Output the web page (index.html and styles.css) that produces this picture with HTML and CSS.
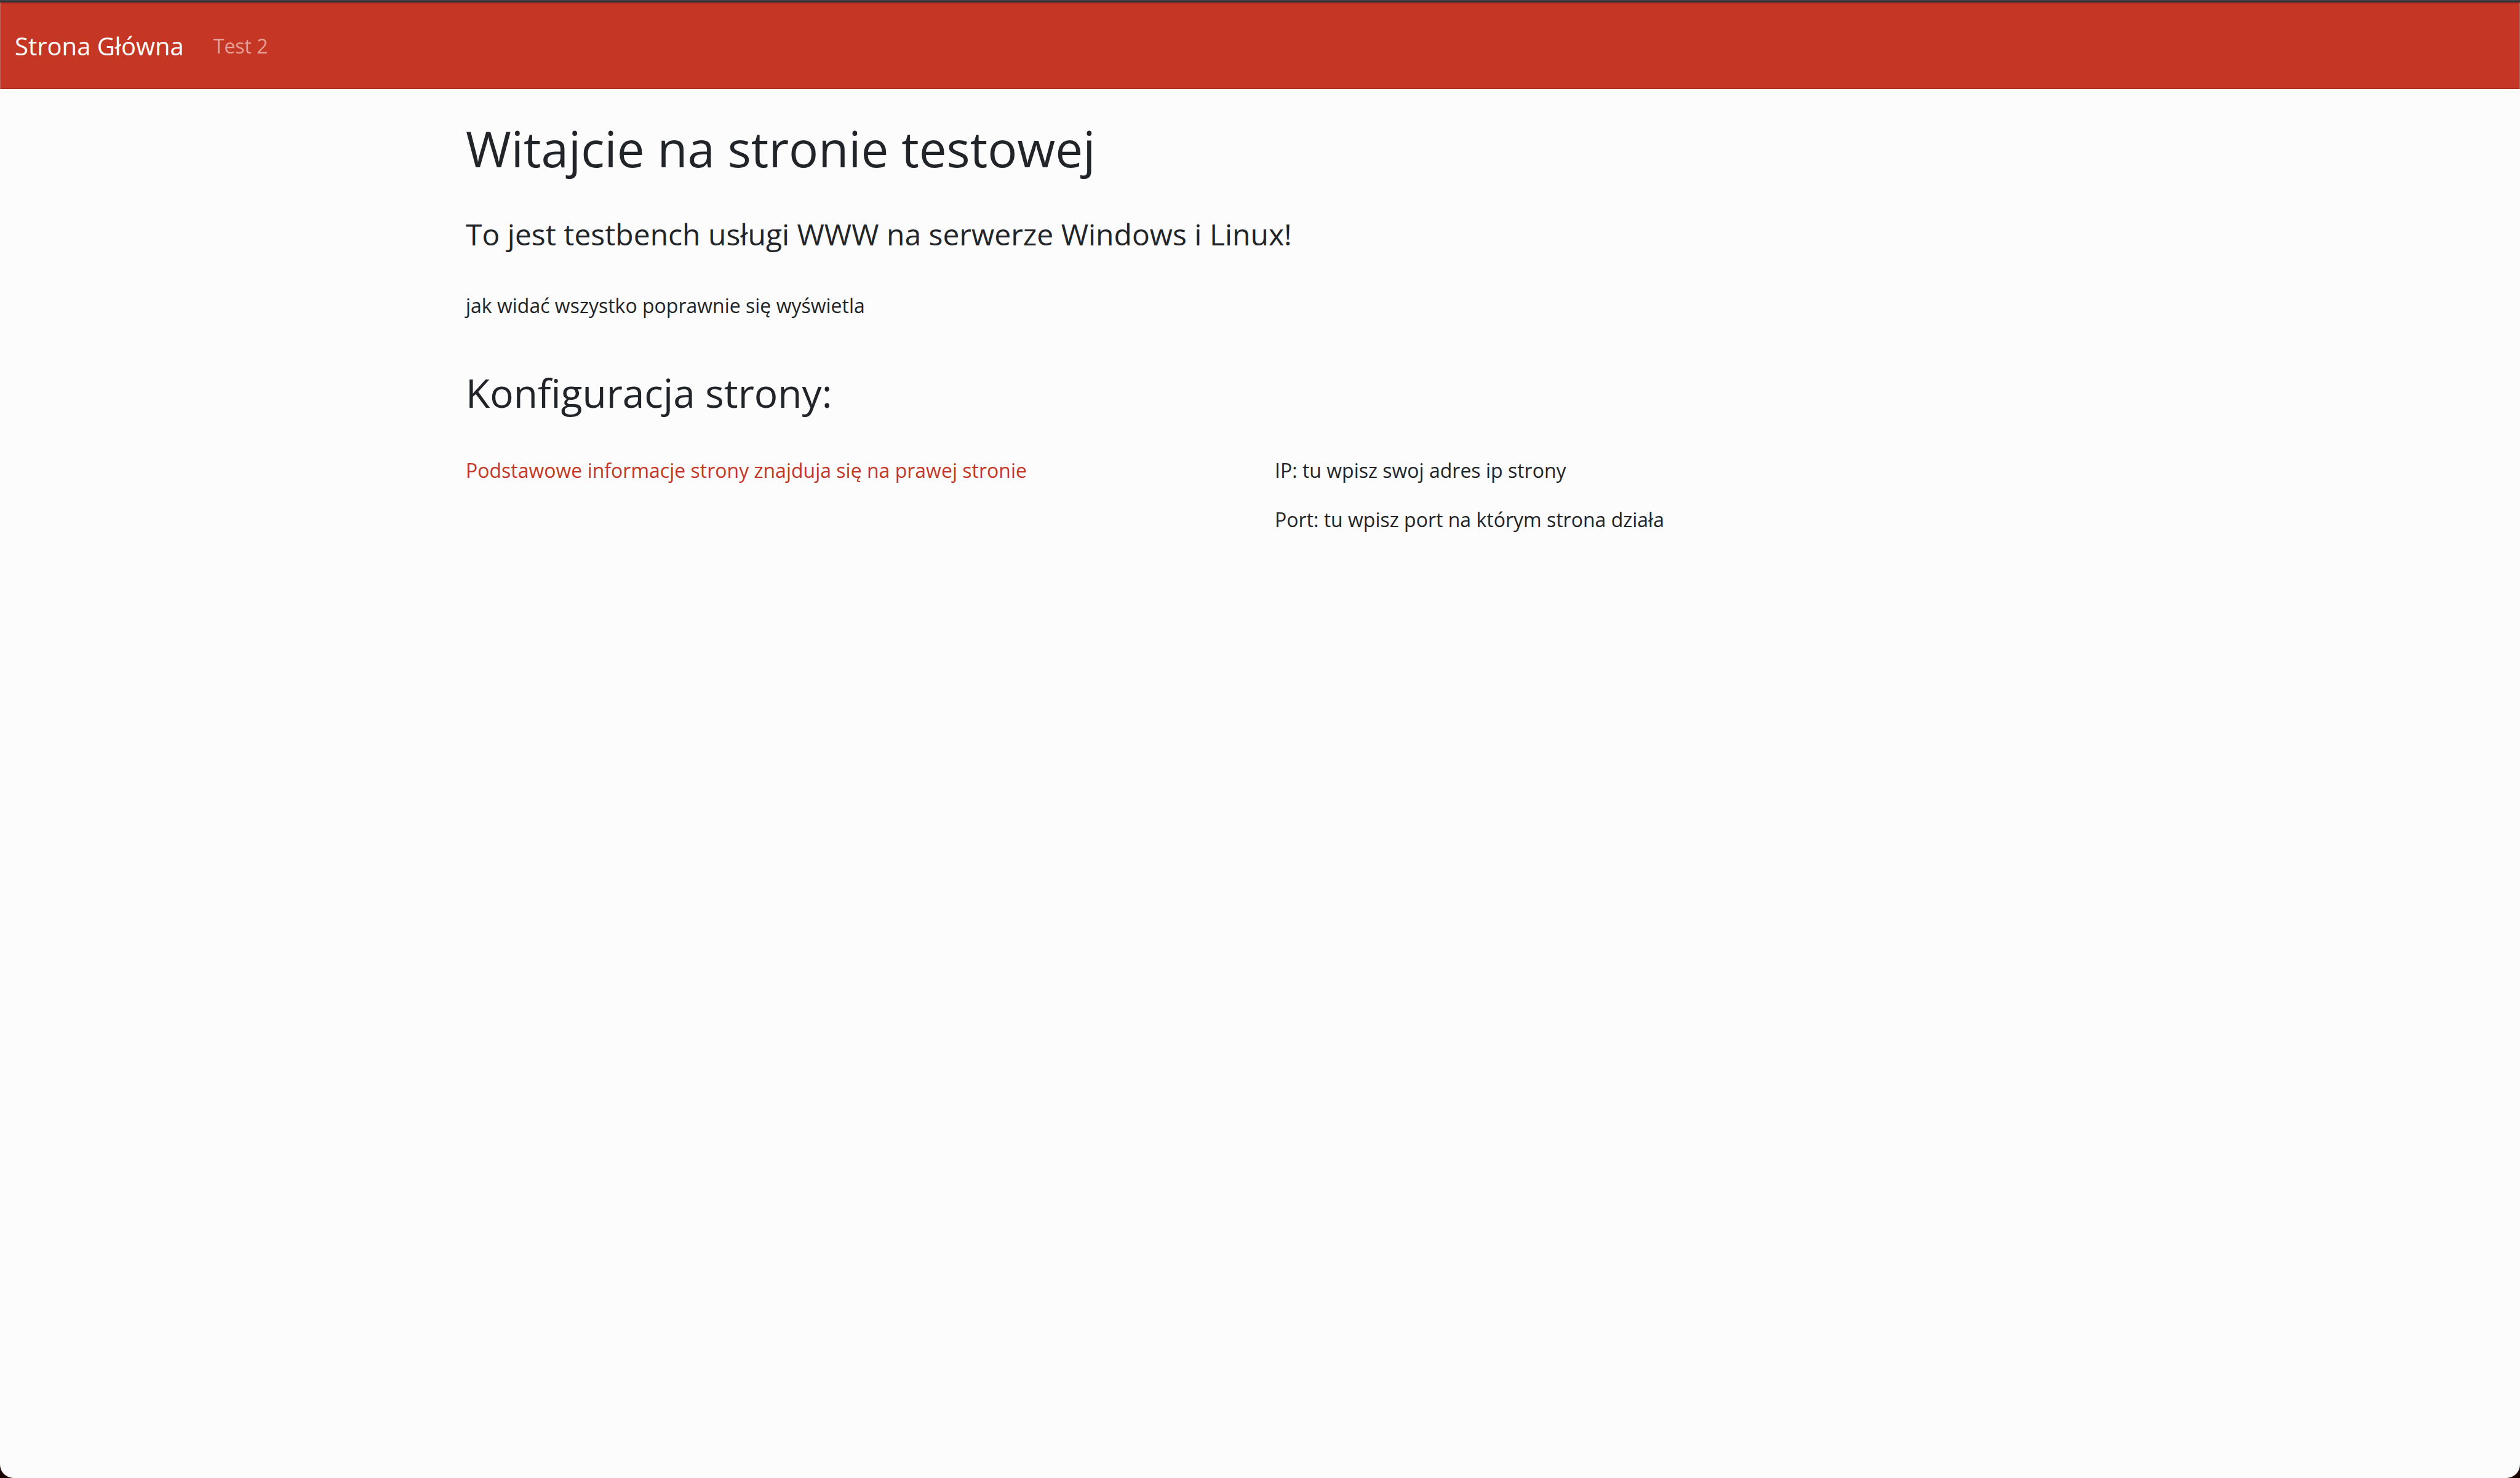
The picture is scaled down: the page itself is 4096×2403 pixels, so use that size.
FILE: index.html
```html
<!DOCTYPE html>
<html lang="pl">
<head>
<meta charset="utf-8">
<meta name="viewport" content="width=device-width, initial-scale=1">
<title>Strona testowa</title>
<link rel="stylesheet" href="styles.css">
</head>
<body>
<div class="page">
  <header class="topbar">
    <nav class="navbar">
      <a class="brand" href="#">Strona Główna</a>
      <a class="nav-link" href="#">Test 2</a>
    </nav>
  </header>
  <main class="container">
    <h1>Witajcie na stronie testowej</h1>
    <h3>To jest testbench usługi WWW na serwerze Windows i Linux!</h3>
    <p>jak widać wszystko poprawnie się wyświetla</p>
    <h2>Konfiguracja strony:</h2>
    <div class="row">
      <div class="col">
        <p class="accent">Podstawowe informacje strony znajduja się na prawej stronie</p>
      </div>
      <div class="col">
        <p>IP: tu wpisz swoj adres ip strony</p>
        <p>Port: tu wpisz port na którym strona działa</p>
      </div>
    </div>
  </main>
</div>
</body>
</html>
```
FILE: styles.css
```css
* {
  box-sizing: border-box;
}

html {
  background: #1a0202;
}

body {
  margin: 0;
  font-family: "Open Sans", "Noto Sans", sans-serif;
  font-size: 32px;
  line-height: 48px;
  color: #212529;
}

.page {
  min-height: 100vh;
  background: #fcfcfc;
  border-radius: 0 0 22px 22px;
}

.topbar {
  padding-top: 4px;
  background: linear-gradient(#414349 0 2px, #2d3036 2px 4px, #c53724 4px);
}

.navbar {
  display: flex;
  align-items: center;
  height: 141px;
  padding: 0 24px;
  background: #c53724;
  box-shadow: inset 2px 0 #bb5c50, inset -2px 0 #bb5c50, inset 0 2px #b02f1f, inset 0 -2px #ad2c21;
}

.brand {
  margin-right: 32px;
  font-size: 40px;
  line-height: 60px;
  color: #fff;
  text-decoration: none;
}

.nav-link {
  padding: 16px;
  color: #e59f96;
  text-decoration: none;
}

.container {
  width: 100%;
  max-width: 2630px;
  margin: 0 auto;
  padding: 48px 24px;
}

h1, h2, h3, p {
  margin: 0;
  font-weight: 400;
}

h1 {
  margin-bottom: 64px;
  font-size: 80px;
  line-height: 96px;
}

h3 {
  margin-bottom: 64px;
  font-size: 48px;
  line-height: 56px;
}

h2 {
  margin: 80px 0 64px;
  font-size: 64px;
  line-height: 76px;
}

.row {
  display: grid;
  grid-template-columns: 1fr 1fr;
  column-gap: 48px;
}

.col {
  display: flex;
  flex-direction: column;
  gap: 32px;
}

.accent {
  color: #c53724;
}
```
